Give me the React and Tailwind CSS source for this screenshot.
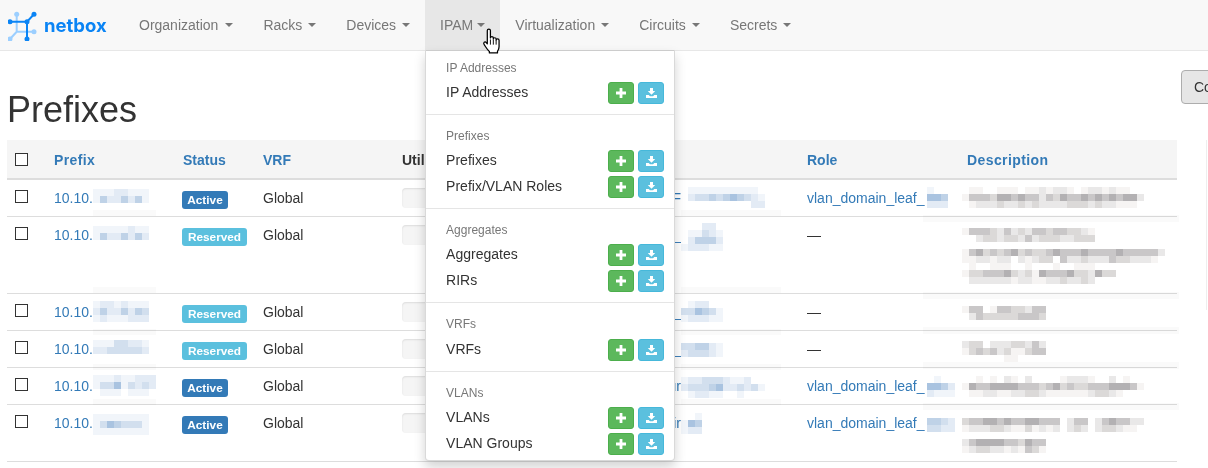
import React from "react";

const BLUE = ["transparent", "#f1f5fa", "#e3ebf5", "#d2dfee", "#bfd2e7", "#a9c3e0"];
const GRAY = ["transparent", "#f6f4f3", "#e9e8e8", "#dbd9d8", "#c9c7c8", "#b3b1b3"];

function Mosaic({ rows, tone = BLUE, dy = 0, dx = 0 }) {
  return (
    <div className="shrink-0 self-start" style={{ marginTop: dy, marginLeft: dx }}>
      {rows.map((row, i) => (
        <div key={i} className="flex h-[7px]">
          {row.split("").map((c, j) => (
            <div key={j} className="w-[7px] h-[7px]" style={{ background: tone[+c] }} />
          ))}
        </div>
      ))}
    </div>
  );
}

const rowsData = [
  {
    lines: 1, status: "Active",
    prefix: { dy: 1, rows: ["11122111", "14224241"] },
    peek: "Domain F",
    tenant: { dy: -1, rows: ["011111111110", "023343454321", "000000000022"] },
    role: true, roleM: { dy: -1, dx: 2, rows: ["100", "554", "222"] },
    desc: { dy: -1, dx: -5, rows: ["01100111011212210122121100", "14443554544243544545454552", "01222322323222233323221110"] },
  },
  {
    lines: 3, status: "Reserved",
    prefix: { dy: 1, rows: ["11111211", "14224242"] },
    peek: "vlan_",
    tenant: { dy: -2, rows: ["000220", "011321", "024442", "122211"] },
    role: false,
    desc: { dy: 3, dx: -5, rows: ["1444324232443443321", "0023323324233322333", "0", "14534345343345444544445444442", "1122122021233042232224332221", "0100111001000100111000", "1334445323154445332533", "0222222122112232232"] },
  },
  {
    lines: 1, status: "Reserved",
    prefix: { dy: -1, rows: ["12212111", "24224243", "12111222"] },
    peek: "vlan_",
    tenant: { dy: -1, rows: ["012200", "335431", "122211"] },
    role: false,
    desc: { dy: 4, dx: -5, rows: ["144014433244", "024333334443"] },
  },
  {
    lines: 1, status: "Reserved",
    prefix: { dy: 1, rows: ["11133221", "22333332"] },
    peek: "vlan_",
    tenant: { dy: 4, rows: ["334421", "233321"] },
    role: false,
    desc: { dy: 2, dx: -5, rows: ["233022233242", "134342311344", "000000110000"] },
  },
  {
    lines: 1, status: "Active",
    prefix: { dy: -1, rows: ["111211222", "133513232", "011101110"] },
    peek: "Fabric-ur",
    tenant: { dy: 1, rows: ["122333211200", "233345223231", "012211001000"] },
    role: true, roleM: { dy: 0, dx: 2, rows: ["0100", "5542", "2111"] },
    desc: { dy: 0, dx: -5, rows: ["00101021020000122210020100", "15445555444345343344455541", "01122112233211111123321000"] },
  },
  {
    lines: 2, status: "Active",
    prefix: { dy: 1, rows: ["11111111", "13543331", "11111111"] },
    peek: "Spine-ir",
    tenant: { dy: 0, rows: ["001", "154", "122"] },
    role: true, roleM: { dy: 5, dx: 2, rows: ["4432", "3322"] },
    desc: { dy: 5, dx: -5, rows: ["34455454455444024402454422", "12223321131212023202332110", "000000000000", "245555443544", "123322121431"] },
  },
];

const NAV = ["Organization", "Racks", "Devices", "IPAM", "Virtualization", "Circuits", "Secrets"];

const MENU = [
  ["IP Addresses", ["IP Addresses"]],
  ["Prefixes", ["Prefixes", "Prefix/VLAN Roles"]],
  ["Aggregates", ["Aggregates", "RIRs"]],
  ["VRFs", ["VRFs"]],
  ["VLANs", ["VLANs", "VLAN Groups"]],
];

const STRIP_TOPS = [
  { left: 93, width: 63, ys: [210, 287, 329, 364, 399], h: 6 },
  { left: 681, width: 100, ys: [210, 287, 329, 364, 399], h: 6 },
  { left: 923, width: 256, ys: [215, 292, 327, 362, 403], h: 7 },
];

function Logo() {
  return (
    <svg width="30" height="32" viewBox="8 9 30 32" className="shrink-0">
      <g stroke="#9ccfff" strokeWidth="2" fill="none">
        <path d="M16.700 14.300V31.700H34M16.700 31.700L10 39" />
      </g>
      <g fill="#9ccfff">
        <circle cx="16.700" cy="14.300" r="2.500" />
        <circle cx="34" cy="31.700" r="2.500" />
        <circle cx="10" cy="39" r="2.500" />
      </g>
      <g stroke="#0a84f5" strokeWidth="2" fill="none">
        <path d="M10 21.700H27L34 14.300M27 21.700V39" />
      </g>
      <g fill="#0a84f5">
        <circle cx="10" cy="21.700" r="2.500" />
        <circle cx="27" cy="21.700" r="2.500" />
        <circle cx="34" cy="14.300" r="2.500" />
        <circle cx="27" cy="39" r="2.500" />
      </g>
    </svg>
  );
}

function Caret({ className }) {
  return <span className={`w-0 h-0 border-x-4 border-x-transparent border-t-4 border-t-[#777] ${className}`} />;
}

function PlusIcon() {
  return (
    <svg width="10" height="10" viewBox="0 0 10 10" fill="#fff">
      <path d="M3.600 0h2.800v3.600H10v2.800H6.400V10H3.600V6.400H0V3.600h3.600z" />
    </svg>
  );
}

function ImportIcon() {
  return (
    <svg width="11" height="10" viewBox="0 0 11 10" fill="#fff">
      <path d="M4 0h3v3h2.200L5.500 6.800 1.800 3H4zM0 7h2.700l1.300 1.200h3L8.300 7H11v3H0z" />
    </svg>
  );
}

function Hand() {
  return (
    <svg width="21" height="26" viewBox="0 0 19 25" className="absolute left-[57px] top-[28px] z-20">
      <path
        d="M4.500 2.500c0-2 3-2 3 0V9.500c0-1.500 2.800-1.500 2.800 0v1c0-1.500 2.700-1.500 2.700 0v1c0-1.300 2.800-1.300 2.800.2V18c0 2-.6 3-1.500 4.500V24H6.500v-1.500C4.500 21 3.500 19 1.500 16c-1.300-2 .7-3.500 2-2l1 1.200z"
        fill="#fff"
        stroke="#000"
        strokeWidth="1.200"
        strokeLinejoin="round"
      />
      <path d="M7.500 11v5M10.300 11v5M13 11.500v4.500" stroke="#000" strokeWidth="0.900" />
    </svg>
  );
}

function Menu() {
  return (
    <div className="absolute left-0 top-[50px] w-[250px] bg-white border border-black/15 border-t-[#ccc] rounded-b shadow-[0_6px_12px_rgba(0,0,0,0.175)] pt-[5px] pb-[4px] z-10">
      {MENU.map(([head, items], i) => (
        <div key={head}>
          {i > 0 && <div className="h-px bg-[#e5e5e5] my-[9px]" />}
          <div className={`px-5 pt-[4px] text-xs leading-[17px] text-[#777] ${i === 3 ? "pb-[3px]" : "pb-[2px]"}`}>{head}</div>
          {items.map((it) => (
            <div key={it} className="flex items-center justify-between h-[26px] pl-5 pr-[10px] text-sm text-[#333]">
              <span>{it}</span>
              <span className="flex gap-1 self-start mt-[3px]">
                <span className="flex items-center justify-center w-[26px] h-[22px] rounded-[3px] bg-[#5cb85c] border border-[#4cae4c]">
                  <PlusIcon />
                </span>
                <span className="flex items-center justify-center w-[26px] h-[22px] rounded-[3px] bg-[#5bc0de] border border-[#46b8da]">
                  <ImportIcon />
                </span>
              </span>
            </div>
          ))}
        </div>
      ))}
    </div>
  );
}

function Checkbox({ className = "mt-[2px]" }) {
  return <div className={`w-[13px] h-[13px] border border-[#333] bg-white ${className}`} />;
}

export default function App() {
  return (
    <div className="relative w-[1208px] h-[468px] overflow-hidden bg-white font-['Liberation_Sans',Arial,sans-serif] text-sm leading-5 text-[#333]">
      <nav className="flex h-[51px] bg-[#f8f8f8] border-b border-[#e7e7e7]">
        <div className="flex items-center w-[124px] pl-[8px] gap-[6px]">
          <Logo />
          <span className="font-['Inter',sans-serif] font-bold text-[18.500px] text-[#0a84f5]">netbox</span>
        </div>
        {NAV.map((n) => (
          <div key={n} className={`relative flex items-center h-[50px] px-[15px] text-[#777] ${n === "IPAM" ? "bg-[#e7e7e7]" : ""}`}>
            {n}
            <Caret className={n === "Organization" ? "ml-[7px]" : n === "IPAM" ? "ml-[4px]" : "ml-[6px]"} />
            {n === "IPAM" && <Menu />}
            {n === "IPAM" && <Hand />}
          </div>
        ))}
      </nav>

      <div className="flex items-start pl-[7px] pt-[19px] w-[1400px]">
        <h1 className="w-[1174px] shrink-0 mt-[20px] text-[36px] leading-[40px] font-normal">Prefixes</h1>
        <button className="shrink-0 h-[34px] px-3 border border-[#adadad] rounded bg-[#e6e6e6] text-[#333]">Configure</button>
      </div>

      <div className="flex mt-[10px] pl-[7px]">
        <table className="w-[1170px] shrink-0 table-fixed border-separate border-spacing-0">
          <colgroup>
            <col className="w-[39px]" />
            <col className="w-[129px]" />
            <col className="w-[80px]" />
            <col className="w-[139px]" />
            <col className="w-[226px]" />
            <col className="w-[179px]" />
            <col className="w-[160px]" />
            <col className="w-[218px]" />
          </colgroup>
          <thead>
            <tr className="bg-[#f5f5f5]">
              <th className="h-[40px] border-b-2 border-[#ddd] pl-2 pr-2 align-middle text-left"><Checkbox className="mt-0" /></th>
              {["Prefix", "Status", "VRF", "Utilization", "VLAN", "Role", "Description"].map((h) => (
                <th
                  key={h}
                  className={`h-[40px] border-b-2 border-[#ddd] px-2 pt-[2px] text-left font-bold ${h === "Utilization" ? "text-[#333]" : "text-[#337ab7]"} ${h === "Prefix" || h === "Description" ? "tracking-[0.4px]" : ""}`}
                >
                  {h}
                </th>
              ))}
            </tr>
          </thead>
          <tbody>
            {rowsData.map((r, i) => (
              <tr key={i}>
                <td className="border-b border-[#ddd] p-2 align-top"><Checkbox /></td>
                <td className="border-b border-[#ddd] p-2 align-top">
                  <div className="flex h-5 text-[#337ab7]">
                    <span>10.10.</span>
                    <Mosaic {...r.prefix} />
                  </div>
                </td>
                <td className="border-b border-[#ddd] p-2 align-top">
                  <div className="h-5">
                    <span className={`flex items-center justify-center h-[18px] translate-y-[3px] ml-[-1px] rounded-[3px] text-[11.800px] font-bold text-white ${r.status === "Active" ? "w-[46px] bg-[#337ab7]" : "w-[65px] bg-[#5bc0de]"}`}>
                      {r.status}
                    </span>
                  </div>
                </td>
                <td className="border-b border-[#ddd] p-2 align-top">Global</td>
                <td className="border-b border-[#ddd] p-2 align-top">
                  <div className="h-5 rounded bg-[#f5f5f5] shadow-[inset_0_1px_2px_rgba(0,0,0,0.1)]" />
                </td>
                <td className="border-b border-[#ddd] py-2 pl-2 pr-0 align-top">
                  <div className="flex h-5 text-[#337ab7]">
                    <span className="w-[53px] shrink-0 flex justify-end overflow-hidden whitespace-nowrap">{r.peek}</span>
                    <Mosaic {...r.tenant} />
                  </div>
                </td>
                <td className="border-b border-[#ddd] p-2 align-top">
                  {r.role ? (
                    <div className="flex h-5 text-[#337ab7] whitespace-nowrap">
                      <span>vlan_domain_leaf_</span>
                      <Mosaic {...r.roleM} />
                    </div>
                  ) : (
                    <span>—</span>
                  )}
                </td>
                <td className="border-b border-[#ddd] p-2 align-top">
                  <div style={{ height: r.lines * 20 }}>
                    <div className="flex h-0">
                      <Mosaic {...r.desc} tone={GRAY} />
                    </div>
                  </div>
                </td>
              </tr>
            ))}
          </tbody>
        </table>
        <div className="ml-[29px] w-px h-[170px] bg-[#eee]" />
      </div>

      {STRIP_TOPS.flatMap((s) =>
        s.ys.map((y) => (
          <div
            key={s.left + "-" + y}
            className="absolute bg-[#fafafa] mix-blend-multiply"
            style={{ left: s.left, width: s.width, top: y, height: s.h }}
          />
        ))
      )}
    </div>
  );
}
